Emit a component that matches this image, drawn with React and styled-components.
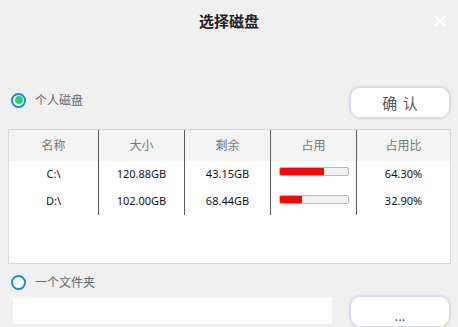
import React from 'react'
import styled, { createGlobalStyle } from 'styled-components'

const GlobalStyle = createGlobalStyle`
	body {
		margin: 0;
		background: #f0f0f0;
		font-family: "Noto Sans", "Noto Sans CJK SC", sans-serif;
	}
`

const Dialog = styled.div`
	width: 458px;
	height: 327px;
	overflow: hidden;
	background: #f0f0f0;
	display: flex;
	flex-direction: column;
`

const TitleBar = styled.div`
	height: 42px;
	display: grid;
	grid-template-columns: 1fr auto 1fr;
	align-items: center;
`

const Title = styled.h1`
	grid-column: 2;
	margin: 0;
	font-family: "Noto Sans CJK SC", sans-serif;
	font-size: 15px;
	font-weight: 700;
	color: #222;
	line-height: 20px;
`

const CloseButton = styled.button`
	justify-self: end;
	margin-right: 12px;
	width: 12px;
	height: 12px;
	padding: 0;
	border: 0;
	background: transparent;
	display: flex;
	svg { display: block; }
`

const OptionRow = styled.div`
	margin-top: 45px;
	display: flex;
	justify-content: space-between;
	align-items: flex-start;
	padding: 0 8px 0 11px;
`

const RadioLabel = styled.label`
	display: flex;
	align-items: center;
	gap: 9px;
	margin-top: ${p => p.$offset || 0}px;
	padding-left: ${p => p.$indent || 0}px;
	font-family: "Noto Sans CJK SC", sans-serif;
	font-size: 12px;
	color: #666;
	line-height: 16px;
`

const RadioCircle = styled.span`
	width: 15px;
	height: 15px;
	box-sizing: border-box;
	border: 2px solid #1a86d8;
	border-radius: 50%;
	background: #fff;
	display: flex;
	align-items: center;
	justify-content: center;
	&::after {
		content: '';
		width: 8px;
		height: 8px;
		border-radius: 50%;
		background: ${p => (p.$checked ? '#2ecc71' : 'transparent')};
	}
`

const PillButton = styled.button`
	width: 100px;
	height: 31px;
	box-sizing: border-box;
	border: 1px solid #d3d9e8;
	border-radius: 10px;
	background: #fff;
	box-shadow: 0 0 3px rgba(110, 130, 180, 0.45);
	font-family: "Noto Sans CJK SC", sans-serif;
	font-size: ${p => p.$size || 15}px;
	color: #555;
	padding: ${p => p.$pad || '0'};
	display: flex;
	align-items: center;
	justify-content: center;
	letter-spacing: ${p => p.$spacing || 0}px;
	flex-shrink: 0;
`

const Table = styled.div`
	margin: 11px 7px 0 8px;
	height: 135px;
	box-sizing: border-box;
	border: 1px solid #d8d8d8;
	background: #fff;
`

const Row = styled.div`
	display: grid;
	grid-template-columns: 89px 86px 86px 86px 1fr;
	height: ${p => (p.$head ? 31 : 27)}px;
	background: ${p => (p.$head ? '#f3f3f3' : '#fff')};
`

const Cell = styled.div`
	display: flex;
	align-items: center;
	justify-content: ${p => (p.$left ? 'flex-start' : 'center')};
	padding: ${p => (p.$head ? '0 0 2px' : p.$left ? '0 0 3px 8px' : '0 0 3px')};
	border-left: ${p => (p.$first ? 'none' : '1px solid #5a5a5a')};
	font-family: ${p => (p.$head ? '"Noto Sans CJK SC", sans-serif' : '"Noto Sans", "Noto Sans CJK SC", sans-serif')};
	font-size: ${p => (p.$head ? 12 : 11)}px;
	color: ${p => (p.$head ? '#777' : '#111')};
`

const Bar = styled.div`
	width: 70px;
	height: 9px;
	box-sizing: border-box;
	border: 1px solid #b8b8b8;
	border-radius: 2px;
	background: #f2f2f2;
	overflow: hidden;
	margin-top: ${p => p.$top || 0}px;
`

const BarFill = styled.div`
	height: 100%;
	background: #ff0000;
`

const InputRow = styled.div`
	margin-top: 6px;
	display: flex;
	align-items: flex-start;
	gap: 18px;
	padding-left: 13px;
`

const PathInput = styled.input`
	width: 319px;
	height: 26px;
	margin-top: 2px;
	box-sizing: border-box;
	border: 0;
	background: #fff;
	outline: none;
`

const disks = [
	{ name: 'C:\\', size: '120.88GB', free: '43.15GB', pct: 64.3, top: -4 },
	{ name: 'D:\\', size: '102.00GB', free: '68.44GB', pct: 32.9, top: -2 },
]

function Close() {
	return (
		<svg width="12" height="12" viewBox="0 0 12 12">
			<path d="M1 1 L11 11 M11 1 L1 11" stroke="#fff" strokeWidth="2" strokeLinecap="round" />
		</svg>
	)
}

export default function App() {
	return (
		<>
			<GlobalStyle />
			<Dialog>
				<TitleBar>
					<Title>选择磁盘</Title>
					<CloseButton aria-label="close">
						<Close />
					</CloseButton>
				</TitleBar>

				<OptionRow>
					<RadioLabel $offset={5}>
						<RadioCircle $checked />
						个人磁盘
					</RadioLabel>
					<PillButton $spacing={1} $pad="0 0 0 1px">确 认</PillButton>
				</OptionRow>

				<Table>
					<Row $head>
						<Cell $head $first>名称</Cell>
						<Cell $head>大小</Cell>
						<Cell $head>剩余</Cell>
						<Cell $head>占用</Cell>
						<Cell $head>占用比</Cell>
					</Row>
					{disks.map(d => (
						<Row key={d.name}>
							<Cell $first>{d.name}</Cell>
							<Cell>{d.size}</Cell>
							<Cell>{d.free}</Cell>
							<Cell $left>
								<Bar $top={d.top}>
									<BarFill style={{ width: `${d.pct}%` }} />
								</Bar>
							</Cell>
							<Cell>{d.pct.toFixed(2)}%</Cell>
						</Row>
					))}
				</Table>

				<RadioLabel $offset={10} $indent={11}>
					<RadioCircle />
					一个文件夹
				</RadioLabel>

				<InputRow>
					<PathInput />
					<PillButton $size={13} $pad="8px 0 0">...</PillButton>
				</InputRow>
			</Dialog>
		</>
	)
}
